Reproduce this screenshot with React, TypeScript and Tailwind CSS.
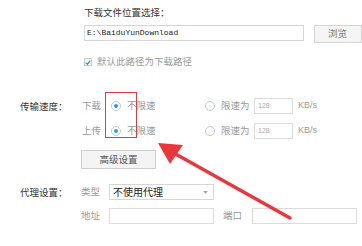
import React from "react";

const label = "text-[#333] text-[9.5px] leading-none";
const sub = "text-[#999] text-[9.5px] leading-none";

function Radio({ checked }: { checked?: boolean }) {
  return (
    <span className="w-[10px] h-[10px] rounded-full border border-[#c9c9c9] bg-white flex items-center justify-center shrink-0">
      {checked && <span className="w-[4px] h-[4px] rounded-full bg-[#2d9cf0]" />}
    </span>
  );
}

function SpeedRow({ name }: { name: string }) {
  return (
    <div className="flex items-center h-[16px]">
      <span className={`${sub} w-[29px]`}>{name}</span>
      <Radio checked />
      <span className={`${sub} ml-[6px] w-[78px]`}>不限速</span>
      <Radio />
      <span className={`${sub} ml-[6px] w-[33px]`}>限速为</span>
      <div className="w-[39px] h-[16px] border border-[#dcdcdc] flex items-center pl-[3px] text-[7px] text-[#aaa] font-['Liberation_Sans',sans-serif]">
        128
      </div>
      <span className="ml-[5px] text-[9px] text-[#999] font-['Liberation_Sans',sans-serif]">KB/s</span>
    </div>
  );
}

export default function App() {
  return (
    <div className="relative w-[362px] h-[246px] bg-white overflow-hidden font-['Noto_Sans_CJK_SC',sans-serif]">
      {/* Download folder */}
      <div className="pl-[84px] pt-[8px]">
        <p className={`${label} h-[10px]`}>下载文件位置选择：</p>
        <div className="flex items-start mt-[7px]">
          <div className="w-[229px] h-[16px] border border-[#d6d6d6] flex items-center pl-[2px] text-[8px] text-[#222] font-['Liberation_Mono',monospace]">
            E:\BaiduYunDownload
          </div>
          <button className="ml-[10px] w-[48px] h-[18px] border border-[#d4d4d4] bg-[#f5f5f5] text-[9.5px] text-[#777] leading-none pl-[13px] text-left shrink-0">
            浏览
          </button>
        </div>
        <div className="flex items-center mt-[14px] h-[10px]">
          <span className="w-[8px] h-[8px] border border-[#c8c8c8] bg-white flex items-center justify-center">
            <svg width="7" height="7" viewBox="0 0 8 8">
              <path d="M1 4.2 L3.2 6.3 L7 1.5" fill="none" stroke="#2f86e0" strokeWidth="1.7" />
            </svg>
          </span>
          <span className={`${sub} ml-[5px]`}>默认此路径为下载路径</span>
        </div>
      </div>

      {/* Transfer speed */}
      <div className="flex pl-[20px] mt-[31px]">
        <span className={`${label} w-[62px] mt-[4px]`}>传输速度：</span>
        <div className="flex flex-col gap-[9px]">
          <SpeedRow name="下载" />
          <SpeedRow name="上传" />
          <button className="mt-[2px] -ml-[1px] w-[75px] h-[19px] border border-[#cfcfcf] bg-[#f4f4f4] text-[9.5px] text-[#555] leading-none">
            高级设置
          </button>
        </div>
      </div>

      {/* Proxy */}
      <div className="flex pl-[20px] mt-[15px]">
        <span className={`${label} w-[61px] mt-[4px]`}>代理设置：</span>
        <div className="flex flex-col gap-[8px]">
          <div className="flex items-center h-[16px]">
            <span className={`${sub} w-[28px]`}>类型</span>
            <div className="w-[105px] h-[16px] border border-[#d6d6d6] flex items-center justify-between pl-[3px] pr-[5px]">
              <span className="text-[10px] text-[#222] leading-none">不使用代理</span>
              <svg width="5" height="3" viewBox="0 0 5 3">
                <path d="M0 0 H5 L2.5 3 Z" fill="#aaa" />
              </svg>
            </div>
          </div>
          <div className="flex items-center h-[16px]">
            <span className={`${sub} w-[28px]`}>地址</span>
            <div className="w-[105px] h-[16px] border border-[#dcdcdc]" />
            <span className={`${sub} ml-[9px] w-[29px]`}>端口</span>
            <div className="w-[105px] h-[16px] border border-[#dcdcdc] shrink-0" />
          </div>
        </div>
      </div>

      {/* Annotation: red box */}
      <div className="absolute left-[105px] top-[92px] w-[32px] h-[46px] border-[1.5px] border-[#dd3b3f]" />

      {/* Annotation: arrow */}
      <svg className="absolute left-0 top-0" width="362" height="246" viewBox="0 0 362 246">
        <line x1="290" y1="218" x2="172" y2="152" stroke="#e8383d" strokeWidth="3.5" strokeLinecap="round" />
        <polygon points="158,143 183,145 170,164" fill="#e8383d" />
      </svg>
    </div>
  );
}
